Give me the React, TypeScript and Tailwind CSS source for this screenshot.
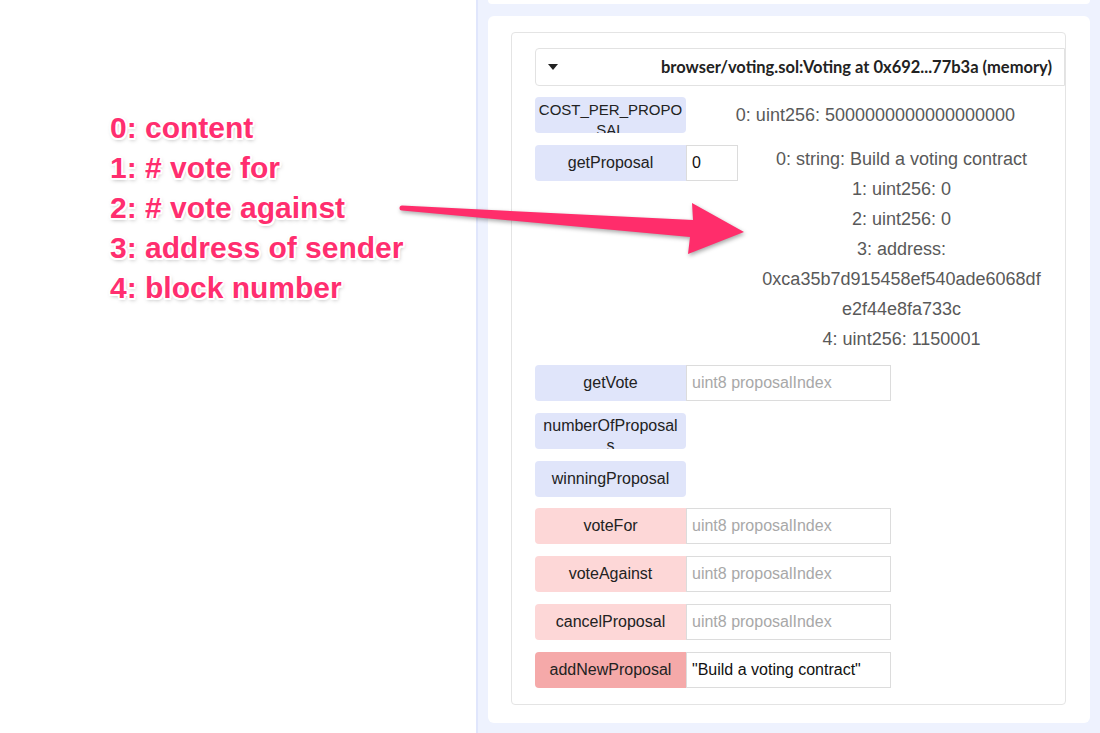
import React from 'react';

type Fn = {
    name: React.ReactNode;
    kind: 'call' | 'transact' | 'payable';
    input?: { value?: string; placeholder?: string; width: string };
    wrap?: string;
    output?: string[];
};

const fns: Fn[] = [
    { name: <>COST_PER_PROPO<br />SAL</>, kind: 'call', wrap: 'text-[15px]', output: ['0: uint256: 5000000000000000000'] },
    {
        name: 'getProposal',
        kind: 'call',
        input: { value: '0', width: 'w-[52px]' },
        output: [
            '0: string: Build a voting contract',
            '1: uint256: 0',
            '2: uint256: 0',
            '3: address:',
            '0xca35b7d915458ef540ade6068df',
            'e2f44e8fa733c',
            '4: uint256: 1150001',
        ],
    },
    { name: 'getVote', kind: 'call', input: { placeholder: 'uint8 proposalIndex', width: 'w-[205px]' } },
    { name: <>numberOfProposal<br />s</>, kind: 'call', wrap: 'text-[16px]' },
    { name: 'winningProposal', kind: 'call' },
    { name: 'voteFor', kind: 'transact', input: { placeholder: 'uint8 proposalIndex', width: 'w-[205px]' } },
    { name: 'voteAgainst', kind: 'transact', input: { placeholder: 'uint8 proposalIndex', width: 'w-[205px]' } },
    { name: 'cancelProposal', kind: 'transact', input: { placeholder: 'uint8 proposalIndex', width: 'w-[205px]' } },
    { name: 'addNewProposal', kind: 'payable', input: { value: '"Build a voting contract"', width: 'w-[205px]' } },
];

const notes = ['0: content', '1: # vote for', '2: # vote against', '3: address of sender', '4: block number'];

const btnColor = {
    call: 'bg-[#e0e5fa]',
    transact: 'bg-[#fdd7d7]',
    payable: 'bg-[#f5a9a9]',
};

const FnRow: React.FC<{ fn: Fn }> = ({ fn }) => (
    <div className={fn.output && fn.output.length > 1 ? 'flex items-start' : 'flex items-center'}>
        <div
            className={`w-[151px] h-[36px] shrink-0 overflow-hidden text-center text-[#222] px-[3px] ${btnColor[fn.kind]} ${
                fn.input ? 'rounded-l-[4px]' : 'rounded-[4px]'
            } ${fn.wrap ? `pt-[3px] leading-[20px] ${fn.wrap}` : 'leading-[36px] text-[16px]'}`}
        >
            {fn.name}
        </div>
        {fn.input && (
            <div
                className={`${fn.input.width} h-[36px] shrink-0 border border-[#dcdcdc] bg-white px-[5px] text-[16px] leading-[34px] whitespace-nowrap overflow-hidden ${
                    fn.input.value ? 'text-[#111]' : 'text-[#a8a8a8]'
                }`}
            >
                {fn.input.value ?? fn.input.placeholder}
            </div>
        )}
        {fn.output && (
            <div className="flex-1 -mt-[1px] text-center text-[18px] leading-[30px] text-[#595959]">
                {fn.output.map((line) => (
                    <div key={line}>{line}</div>
                ))}
            </div>
        )}
    </div>
);

export default function App() {
    return (
        <div className="relative w-[1100px] h-[733px] overflow-hidden flex font-['Liberation_Sans',Arial,sans-serif]">
            <div className="w-[476px] h-full bg-white pt-[108px] pl-[110px]">
                {notes.map((n) => (
                    <div
                        key={n}
                        className="text-[30px] leading-[40px] font-bold text-[#ff2e6f] whitespace-nowrap [text-shadow:2px_0_0_#fff,-2px_0_0_#fff,0_2px_0_#fff,0_-2px_0_#fff,1.5px_1.5px_0_#fff,-1.5px_1.5px_0_#fff,1.5px_-1.5px_0_#fff,-1.5px_-1.5px_0_#fff,1px_2px_4px_rgba(0,0,0,0.35)]"
                    >
                        {n}
                    </div>
                ))}
            </div>

            <div className="flex-1 h-full border-l-[2px] border-[#e0e6fc] bg-[#eef2fe] pl-[10px] pr-[10px] flex flex-col gap-[12px]">
                <div className="h-[4px] bg-white rounded-b-[6px]" />
                <div className="h-[707px] bg-white rounded-[6px] pt-[16px] pl-[23px] pr-[24px]">
                    <div className="h-[673px] border border-[#e4e4e4] rounded-[4px] pt-[15px] pl-[23px] overflow-hidden">
                        <div className="h-[38px] border border-[#e2e2e2] rounded-l-[4px] flex items-center justify-between pl-[12px] pr-[12px] font-['Lato','Liberation_Sans',sans-serif] font-bold text-[16.5px] text-[#222]">
                            <svg width="10" height="6" viewBox="0 0 10 6">
                                <path d="M0 0 L10 0 L5 6 Z" fill="#222" />
                            </svg>
                            <span>browser/voting.sol:Voting at 0x692...77b3a (memory)</span>
                        </div>
                        <div className="mt-[11px] flex flex-col gap-[11.7px]">
                            {fns.map((fn, i) => (
                                <FnRow key={i} fn={fn} />
                            ))}
                        </div>
                    </div>
                </div>
            </div>

            <svg
                className="absolute left-0 top-0 pointer-events-none drop-shadow-[1px_2px_2px_rgba(0,0,0,0.35)]"
                width="1100"
                height="733"
                viewBox="0 0 1100 733"
            >
                <path
                    d="M402 205.5 L693 220 L692 203 L744 232 L688 254 L690 237 L402 210.5 A2.5 2.5 0 0 1 402 205.5 Z"
                    fill="#ff2d6b"
                />
            </svg>
        </div>
    );
}
